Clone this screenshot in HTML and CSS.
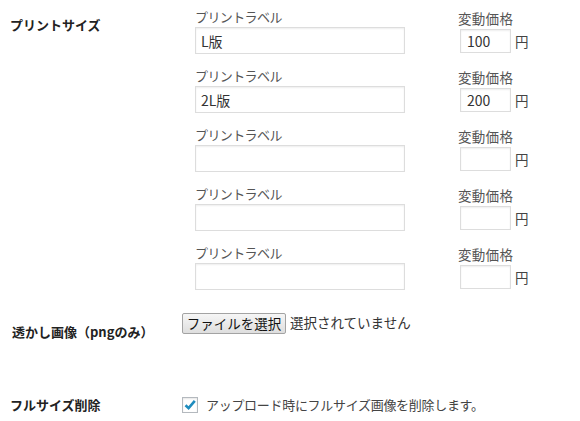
FILE: index.html
```html
<!DOCTYPE html>
<html lang="ja">
<head>
    <meta charset="UTF-8">
    <title>プリント設定</title>
    <link rel="stylesheet" href="styles.css">
</head>
<body>

    <div class="form-table">

        <!-- プリントサイズ -->
        <div class="form-row size-row">
            <div class="row-label">プリントサイズ</div>
            <div class="row-field">
                <div class="print-list">
                    <div class="print-item">
                        <div class="label-col">
                            <div class="field-caption">プリントラベル</div>
                            <input class="text-input" type="text" value="L版">
                        </div>
                        <div class="price-col">
                            <div class="field-caption price-caption">変動価格</div>
                            <div class="price-line">
                                <input class="price-input" type="text" value="100">
                                <span class="unit">円</span>
                            </div>
                        </div>
                    </div>
                    <div class="print-item">
                        <div class="label-col">
                            <div class="field-caption">プリントラベル</div>
                            <input class="text-input" type="text" value="2L版">
                        </div>
                        <div class="price-col">
                            <div class="field-caption price-caption">変動価格</div>
                            <div class="price-line">
                                <input class="price-input" type="text" value="200">
                                <span class="unit">円</span>
                            </div>
                        </div>
                    </div>
                    <div class="print-item">
                        <div class="label-col">
                            <div class="field-caption">プリントラベル</div>
                            <input class="text-input" type="text" value="">
                        </div>
                        <div class="price-col">
                            <div class="field-caption price-caption">変動価格</div>
                            <div class="price-line">
                                <input class="price-input" type="text" value="">
                                <span class="unit">円</span>
                            </div>
                        </div>
                    </div>
                    <div class="print-item">
                        <div class="label-col">
                            <div class="field-caption">プリントラベル</div>
                            <input class="text-input" type="text" value="">
                        </div>
                        <div class="price-col">
                            <div class="field-caption price-caption">変動価格</div>
                            <div class="price-line">
                                <input class="price-input" type="text" value="">
                                <span class="unit">円</span>
                            </div>
                        </div>
                    </div>
                    <div class="print-item">
                        <div class="label-col">
                            <div class="field-caption">プリントラベル</div>
                            <input class="text-input" type="text" value="">
                        </div>
                        <div class="price-col">
                            <div class="field-caption price-caption">変動価格</div>
                            <div class="price-line">
                                <input class="price-input" type="text" value="">
                                <span class="unit">円</span>
                            </div>
                        </div>
                    </div>
                </div>
            </div>
        </div>

        <!-- 透かし画像 -->
        <div class="form-row file-row">
            <div class="row-label">透かし画像（pngのみ）</div>
            <div class="row-field file-field">
                <button class="file-btn" type="button">ファイルを選択</button>
                <span class="file-status">選択されていません</span>
            </div>
        </div>

        <!-- フルサイズ削除 -->
        <div class="form-row check-row">
            <div class="row-label">フルサイズ削除</div>
            <div class="row-field check-field">
                <span class="checkbox">
                    <svg width="14" height="14" viewBox="0 0 14 14">
                        <path d="M2.5 7.2 L5.6 10.2 L11.8 2.8" fill="none" stroke="#1e8cbe" stroke-width="2.6"/>
                    </svg>
                </span>
                <span class="check-text">アップロード時にフルサイズ画像を削除します。</span>
            </div>
        </div>

    </div>

</body>
</html>
```

FILE: styles.css
```css
body {
    margin: 0;
    font-family: "Noto Sans CJK JP", "DejaVu Sans", sans-serif;
    font-size: 13px;
    color: #444;
    background: #fff;
}

.form-row {
    display: grid;
    grid-template-columns: 182px 1fr;
}

.row-label {
    padding-left: 10px;
    font-weight: bold;
    color: #222;
    line-height: 21px;
}

/* プリントサイズ */
.size-row {
    padding-top: 6px;
}

.size-row .row-label {
    padding-top: 8px;
}

.print-list {
    padding-left: 13px;
}

.print-item {
    display: flex;
    margin-bottom: 11px;
}

.print-item:last-child {
    margin-bottom: 0;
}

.label-col {
    width: 210px;
}

.field-caption {
    line-height: 21px;
    height: 21px;
    color: #555;
    letter-spacing: -0.6px;
}

.text-input,
.price-input {
    display: block;
    box-sizing: border-box;
    border: 1px solid #ddd;
    box-shadow: inset 0 1px 2px rgba(0, 0, 0, 0.07);
    background: #fff;
    font-family: "Noto Sans CJK JP", "DejaVu Sans", sans-serif;
    font-size: 14px;
    color: #333;
    margin: 0;
    outline: none;
}

.text-input {
    width: 210px;
    height: 27px;
    padding: 0 5px;
}

.price-col {
    margin-left: 53px;
}

.price-caption {
    padding-top: 2px;
    letter-spacing: 0.3px;
    font-size: 13.5px;
}

.price-line {
    display: flex;
    align-items: center;
    padding-left: 2px;
}

.price-input {
    width: 51px;
    height: 24px;
    padding: 0 6px;
}

.unit {
    margin-left: 4px;
    font-size: 13.5px;
}

/* 透かし画像 */
.file-row {
    margin-top: 23px;
}

.file-row .row-label {
    padding-top: 8px;
    padding-left: 12px;
}

.file-field {
    display: flex;
    align-items: flex-start;
}

.file-btn {
    height: 21px;
    width: 104px;
    padding: 0;
    border: 1px solid #a3a3a3;
    border-radius: 2px;
    background: linear-gradient(#f6f6f6, #dedede);
    font-family: "Noto Sans CJK JP", "DejaVu Sans", sans-serif;
    font-size: 13.5px;
    color: #111;
    line-height: 19px;
    cursor: pointer;
}

.file-status {
    margin-left: 4px;
    line-height: 19px;
    font-size: 13.5px;
    color: #333;
}

/* フルサイズ削除 */
.check-row {
    margin-top: 55px;
    align-items: center;
}

.check-row .row-label {
    line-height: 16px;
}

.check-field {
    display: flex;
    align-items: center;
}

.checkbox {
    box-sizing: border-box;
    width: 16px;
    height: 16px;
    border: 1px solid #b4b9be;
    background: #fff;
    box-shadow: inset 0 1px 2px rgba(0, 0, 0, 0.1);
    display: flex;
    align-items: center;
    justify-content: center;
}

.check-text {
    margin-left: 8px;
    line-height: 16px;
    letter-spacing: -0.3px;
}
```
